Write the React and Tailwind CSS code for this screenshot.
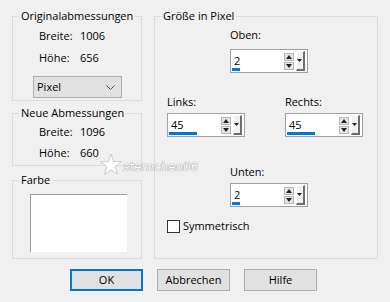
import React from "react";

// small spin edit used in the "Größe in Pixel" group
function SpinBox({ value, barClass }) {
  return (
    <div className="flex h-[24px] w-[78px] border border-[#a0a0a0] bg-white">
      <div className="relative flex-1">
        <span className="block pl-[3px] pt-[3px] leading-4">{value}</span>
        <div className={`absolute bottom-[1px] left-[1px] h-[3px] bg-[#0078d7] ${barClass}`} />
      </div>
      <div className="my-[2px] flex w-[10px] flex-col justify-center gap-[1px]">
        <div className="flex h-[8px] items-center justify-center border border-[#b5b5b5] bg-[#e6e6e6]">
          <svg width="6" height="4" viewBox="0 0 6 4"><path d="M3 0 L6 4 L0 4 Z" fill="#222" /></svg>
        </div>
        <div className="flex h-[8px] items-center justify-center border border-[#b5b5b5] bg-[#e6e6e6]">
          <svg width="6" height="4" viewBox="0 0 6 4"><path d="M0 0 L6 0 L3 4 Z" fill="#222" /></svg>
        </div>
      </div>
      <div className="my-[1px] ml-[2px] mr-[2px] flex w-[9px] items-center justify-center border-b-2 border-r-2 border-l border-t border-b-[#6d6d6d] border-r-[#6d6d6d] border-l-white border-t-white bg-[#f0f0f0]">
        <svg width="5" height="3" viewBox="0 0 5 3"><path d="M0 0 L5 0 L2.5 3 Z" fill="#222" /></svg>
      </div>
    </div>
  );
}

function Button({ children, primary }) {
  return (
    <button
      className={`flex h-[22px] w-[73px] items-center justify-center bg-[#e1e1e1] leading-4 ${
        primary ? "border-2 border-[#0078d7]" : "border border-[#adadad]"
      }`}
    >
      {children}
    </button>
  );
}

export default function App() {
  return (
    <div className="relative h-[302px] w-[390px] overflow-hidden bg-[#f0f0f0] px-3 pt-2 text-[11px] text-black [font-family:'Open_Sans','Noto_Sans',sans-serif]">
      <div className="flex gap-3">
        {/* left column */}
        <div className="flex w-[131px] flex-col">
          <fieldset className="h-[93px] border border-[#dcdcdc]">
            <legend className="ml-[6px] px-[2px] leading-4">Originalabmessungen</legend>
            <div className="grid grid-cols-[41px_auto] gap-y-[6px] pl-[26px] pt-[4px] leading-4">
              <span>Breite:</span>
              <span>1006</span>
              <span>Höhe:</span>
              <span>656</span>
            </div>
            <div className="ml-[20px] mt-[10px] flex h-[22px] w-[89px] items-center justify-between border border-[#adadad] bg-[#e1e1e1] pl-[3px] pr-[6px]">
              <span className="leading-4">Pixel</span>
              <svg width="9" height="5" viewBox="0 0 9 5"><path d="M0.5 0.5 L4.5 4.5 L8.5 0.5" fill="none" stroke="#555" strokeWidth="1" /></svg>
            </div>
          </fieldset>

          <fieldset className="mt-[4px] h-[61px] border border-[#dcdcdc]">
            <legend className="ml-[6px] px-[2px] leading-4">Neue Abmessungen</legend>
            <div className="grid grid-cols-[41px_auto] gap-y-[5px] pl-[26px] pt-[3px] leading-4">
              <span>Breite:</span>
              <span>1096</span>
              <span>Höhe:</span>
              <span>660</span>
            </div>
          </fieldset>

          <fieldset className="mt-[6px] h-[87px] border border-[#dcdcdc]">
            <legend className="ml-[6px] px-[2px] leading-4">Farbe</legend>
            <div className="ml-[17px] mt-[6px] h-[58px] w-[97px] border-l border-t border-[#a0a0a0] bg-white" />
          </fieldset>
        </div>

        {/* right column */}
        <fieldset className="h-[251px] w-[226px] border border-[#dcdcdc]">
          <legend className="ml-[6px] px-[2px] leading-4">Größe in Pixel</legend>
          <div className="flex flex-col">
            <div className="ml-[75px] mt-[3px] flex flex-col">
              <span className="leading-4">Oben:</span>
              <div className="mt-[6px]">
                <SpinBox value="2" barClass="w-[8px]" />
              </div>
            </div>

            <div className="ml-[12px] mt-[21px] flex gap-[40px]">
              <div className="flex flex-col">
                <span className="leading-4">Links:</span>
                <div className="mt-[3px]">
                  <SpinBox value="45" barClass="w-[28px]" />
                </div>
              </div>
              <div className="flex flex-col">
                <span className="leading-4">Rechts:</span>
                <div className="mt-[3px]">
                  <SpinBox value="45" barClass="w-[28px]" />
                </div>
              </div>
            </div>

            <div className="ml-[75px] mt-[27px] flex flex-col">
              <span className="leading-4">Unten:</span>
              <div className="mt-[3px]">
                <SpinBox value="2" barClass="w-[8px]" />
              </div>
            </div>

            <label className="ml-[12px] mt-[11px] flex items-center gap-[3px]">
              <span className="h-[13px] w-[13px] border border-[#333] bg-white" />
              <span className="leading-4">Symmetrisch</span>
            </label>
          </div>
        </fieldset>
      </div>

      {/* buttons */}
      <div className="ml-[58px] mt-[10px] flex gap-[14px]">
        <Button primary>OK</Button>
        <Button>Abbrechen</Button>
        <Button>Hilfe</Button>
      </div>

      {/* watermark */}
      <div className="pointer-events-none absolute left-[100px] top-[153px] flex items-end">
        <svg width="22" height="23" viewBox="0 0 22 23">
          <path d="M11 1 L13.6 8.6 L21.5 8.8 L15.2 13.6 L17.5 21.5 L11 16.8 L4.5 21.5 L6.8 13.6 L0.5 8.8 L8.4 8.6 Z" fill="#ffffff" stroke="#c0c0c0" strokeWidth="0.8" />
        </svg>
        <span className="mb-[3px] ml-[1px] text-[12px] italic leading-none text-white [font-family:'DejaVu_Sans',sans-serif] [text-shadow:0_0_1px_#8a8a8a,0_0_1px_#8a8a8a]">
          sternchen06
        </span>
      </div>
    </div>
  );
}
